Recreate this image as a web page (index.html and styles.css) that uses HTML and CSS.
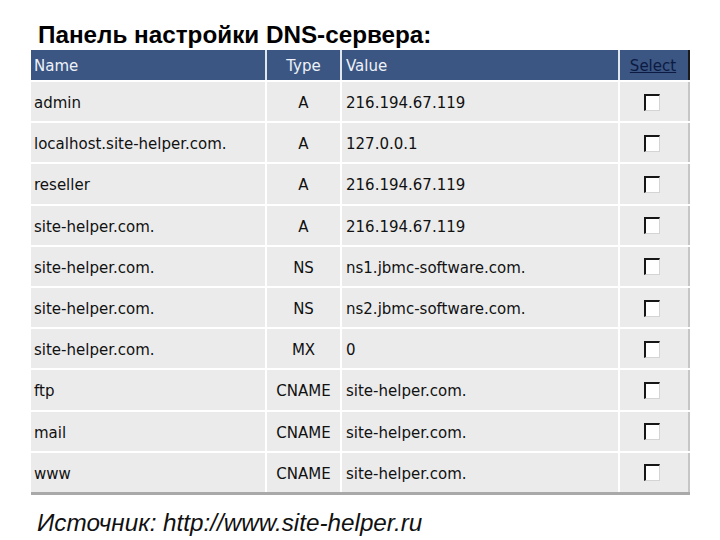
FILE: index.html
```html
<!DOCTYPE html>
<html lang="ru">
<head>
<meta charset="utf-8">
<title>Панель настройки DNS-сервера</title>
<link rel="stylesheet" href="styles.css">
</head>
<body>
<div class="page">
  <h1 class="title">Панель настройки DNS-сервера:</h1>
  <div class="dns">
    <div class="row head">
      <div class="cell name">Name</div>
      <div class="cell type">Type</div>
      <div class="cell value">Value</div>
      <div class="cell sel"><a class="sel-link" href="#">Select</a></div>
    </div>
    <div class="row"><div class="cell name">admin</div><div class="cell type">A</div><div class="cell value">216.194.67.119</div><div class="cell sel"><span class="cb"></span></div></div>
    <div class="row"><div class="cell name">localhost.site-helper.com.</div><div class="cell type">A</div><div class="cell value">127.0.0.1</div><div class="cell sel"><span class="cb"></span></div></div>
    <div class="row"><div class="cell name">reseller</div><div class="cell type">A</div><div class="cell value">216.194.67.119</div><div class="cell sel"><span class="cb"></span></div></div>
    <div class="row"><div class="cell name">site-helper.com.</div><div class="cell type">A</div><div class="cell value">216.194.67.119</div><div class="cell sel"><span class="cb"></span></div></div>
    <div class="row"><div class="cell name">site-helper.com.</div><div class="cell type">NS</div><div class="cell value">ns1.jbmc-software.com.</div><div class="cell sel"><span class="cb"></span></div></div>
    <div class="row"><div class="cell name">site-helper.com.</div><div class="cell type">NS</div><div class="cell value">ns2.jbmc-software.com.</div><div class="cell sel"><span class="cb"></span></div></div>
    <div class="row"><div class="cell name">site-helper.com.</div><div class="cell type">MX</div><div class="cell value">0</div><div class="cell sel"><span class="cb"></span></div></div>
    <div class="row"><div class="cell name">ftp</div><div class="cell type">CNAME</div><div class="cell value">site-helper.com.</div><div class="cell sel"><span class="cb"></span></div></div>
    <div class="row"><div class="cell name">mail</div><div class="cell type">CNAME</div><div class="cell value">site-helper.com.</div><div class="cell sel"><span class="cb"></span></div></div>
    <div class="row last"><div class="cell name">www</div><div class="cell type">CNAME</div><div class="cell value">site-helper.com.</div><div class="cell sel"><span class="cb"></span></div></div>
  </div>
  <p class="source">Источник: http://www.site-helper.ru</p>
</div>
</body>
</html>
```

FILE: styles.css
```css
html, body {
  margin: 0;
  padding: 0;
  background: #ffffff;
}
.page {
  width: 720px;
  height: 540px;
  overflow: hidden;
  padding-top: 20px;
  box-sizing: border-box;
}
.title {
  margin: 0;
  padding-left: 38px;
  font-family: "Liberation Sans", Arial, sans-serif;
  font-weight: bold;
  font-size: 24.25px;
  line-height: 29px;
  color: #000;
}
.dns {
  margin: 1px 0 0 31px;
  width: 659px;
  border-bottom: 3px solid #a9a9a9;
  font-family: "DejaVu Sans", Verdana, sans-serif;
  font-size: 15px;
  color: #111;
}
.row {
  display: grid;
  grid-template-columns: 236px 75px 278px 70px;
  height: 41.2px;
  box-sizing: border-box;
  border-bottom: 2px solid #ffffff;
}
.row.last {
  border-bottom: 0;
  height: 39.2px;
}
.row.head {
  height: 32px;
}
.cell {
  display: flex;
  align-items: center;
  padding-top: 3px;
  box-sizing: border-box;
  background: #ebebeb;
  border-right: 2px solid #ffffff;
  white-space: nowrap;
}
.head .cell {
  padding-top: 2px;
  background: #3b5683;
  color: #eef2f8;
  border-right-color: #dfe6ee;
}
.name { padding-left: 3px; }
.type { justify-content: center; }
.value { padding-left: 4px; }
.sel {
  justify-content: center;
  padding-right: 4px;
  border-right-color: #c6c6c6;
}
.head .sel {
  padding-right: 2px;
  border-right-color: #1a1a1a;
}
.sel-link {
  color: #0c1a42;
  text-decoration: underline;
}
.cb {
  display: block;
  width: 13px;
  height: 14px;
  margin-bottom: 2px;
  background: #ffffff;
  border-top: 2px solid #161616;
  border-left: 2px solid #161616;
  border-right: 1px solid #d4d4d4;
  border-bottom: 1px solid #d4d4d4;
}
.source {
  margin: 15px 0 0 0;
  padding-left: 37px;
  font-family: "Liberation Sans", Arial, sans-serif;
  font-style: italic;
  font-size: 24.25px;
  line-height: 26px;
  color: #111;
}
```
